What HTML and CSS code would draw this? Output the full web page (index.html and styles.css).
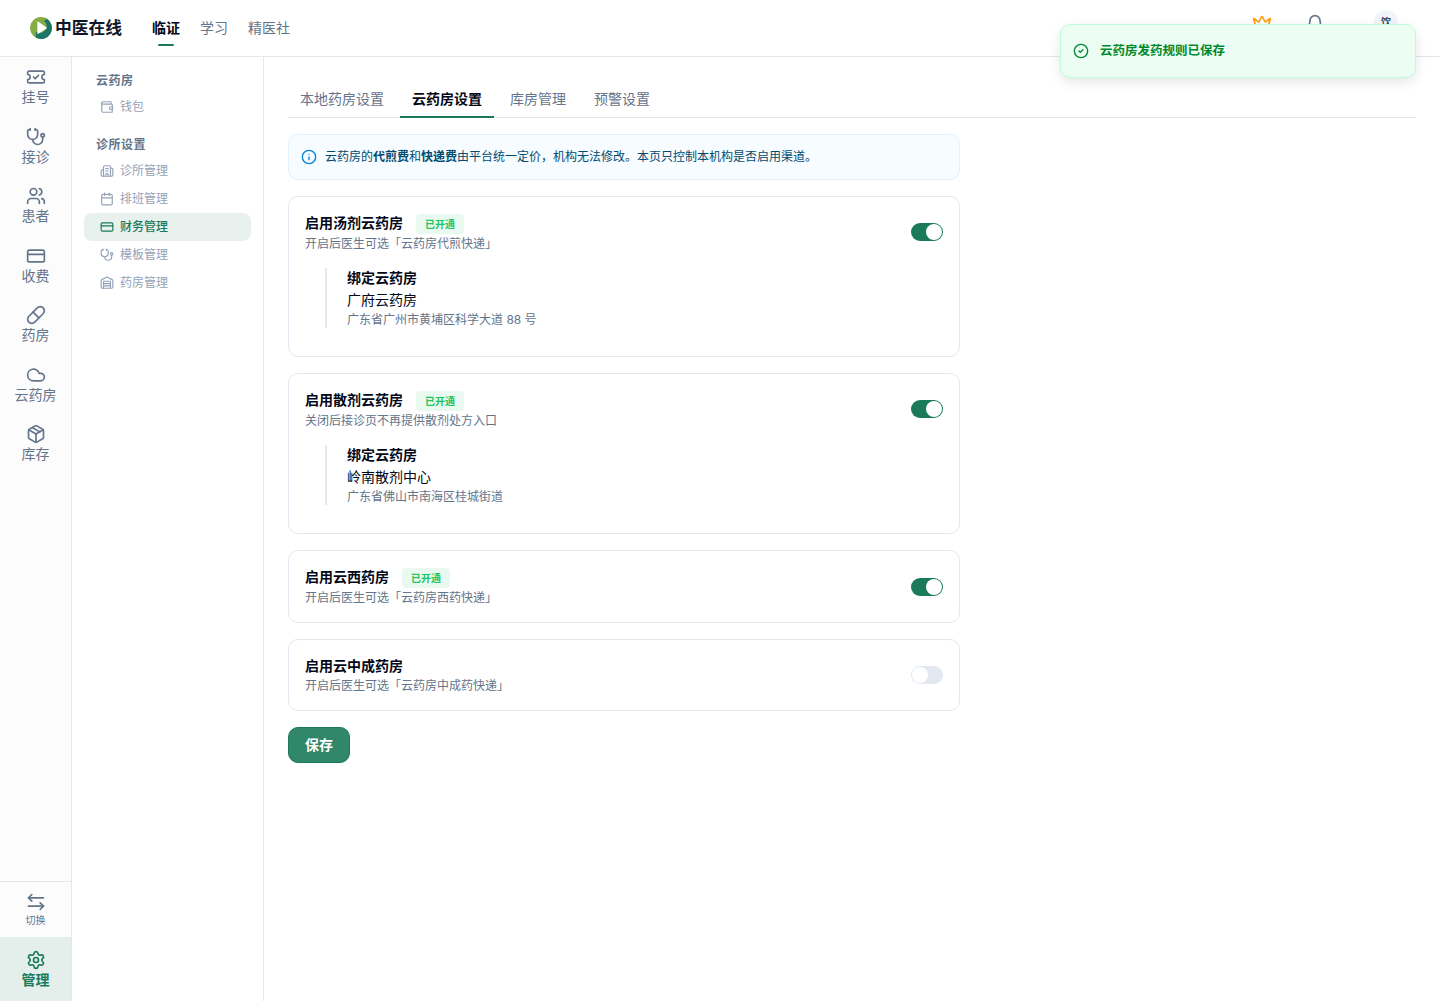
FILE: index.html
```html
<!DOCTYPE html>
<html lang="zh-CN">
<head>
  <meta charset="UTF-8">
  <meta name="viewport" content="width=device-width, initial-scale=1.0">
  <title>中医在线 - 云药房设置</title>

  <link rel="stylesheet" href="styles.css">
</head>
<body>

  <header class="topbar">
    <div class="logo">
      <svg class="logo-mark" viewBox="0 0 22 22">
        <circle cx="11" cy="11" r="10.900" fill="#86ad45"/>
        <path d="M16.500 1.600A10.900 10.900 0 0 1 6.200 20.800Q5 18 6.500 14.500Q12 18 15.500 13Q18.500 7 13.800 3.800Q16 3.500 16.500 1.600Z" fill="#1c7568"/>
        <path d="M7.400 5.200Q7.400 4.300 8.300 4.800L16.400 10.200Q17.200 10.900 16.400 11.500L8.300 16.800Q7.400 17.300 7.400 16.300Z" fill="#fff"/>
      </svg>
      <span>中医在线</span>
    </div>
    <nav class="topnav">
      <a class="active">临证</a>
      <a>学习</a>
      <a>精医社</a>
    </nav>
    <div class="user-tools">
      <svg class="icon crown" viewBox="0 0 24 24"><path d="M11.562 3.266a.5.5 0 0 1 .876 0L15.390 8.870a1 1 0 0 0 1.516.294L21.183 5.500a.5.5 0 0 1 .798.519l-2.834 10.246a1 1 0 0 1-.956.734H5.810a1 1 0 0 1-.957-.734L2.020 6.020a.5.5 0 0 1 .798-.519l4.276 3.664a1 1 0 0 0 1.516-.294z"/><path d="M5 21h14"/></svg>
      <svg class="icon bell" viewBox="0 0 24 24"><path d="M10.268 21a2 2 0 0 0 3.464 0"/><path d="M3.262 15.326A1 1 0 0 0 4 17h16a1 1 0 0 0 .740-1.673C19.410 13.956 18 12.499 18 8A6 6 0 0 0 6 8c0 4.499-1.411 5.956-2.738 7.326"/></svg>
      <span class="avatar">饮</span>
    </div>
  </header>

  <div class="layout">
    <aside class="rail">
      <div class="rail-list">
        <a class="rail-item">
          <svg class="icon" viewBox="0 0 24 24"><path d="M2 9a3 3 0 1 1 0 6v2a2 2 0 0 0 2 2h16a2 2 0 0 0 2-2v-2a3 3 0 1 1 0-6V7a2 2 0 0 0-2-2H4a2 2 0 0 0-2 2Z"/><path d="m9 12 2 2 4-4"/></svg>
          <span>挂号</span>
        </a>
        <a class="rail-item">
          <svg class="icon" viewBox="0 0 24 24"><path d="M11 2v2"/><path d="M5 2v2"/><path d="M5 3H4a2 2 0 0 0-2 2v4a6 6 0 0 0 12 0V5a2 2 0 0 0-2-2h-1"/><path d="M8 15a6 6 0 0 0 12 0v-3"/><circle cx="20" cy="10" r="2"/></svg>
          <span>接诊</span>
        </a>
        <a class="rail-item">
          <svg class="icon" viewBox="0 0 24 24"><path d="M16 21v-2a4 4 0 0 0-4-4H6a4 4 0 0 0-4 4v2"/><circle cx="9" cy="7" r="4"/><path d="M22 21v-2a4 4 0 0 0-3-3.870"/><path d="M16 3.128a4 4 0 0 1 0 7.744"/></svg>
          <span>患者</span>
        </a>
        <a class="rail-item">
          <svg class="icon" viewBox="0 0 24 24"><rect width="20" height="14" x="2" y="5" rx="2"/><path d="M2 10h20"/></svg>
          <span>收费</span>
        </a>
        <a class="rail-item">
          <svg class="icon" viewBox="0 0 24 24"><path d="m10.500 20.500 10-10a4.950 4.950 0 1 0-7-7l-10 10a4.950 4.950 0 1 0 7 7Z"/><path d="m8.500 8.500 7 7"/></svg>
          <span>药房</span>
        </a>
        <a class="rail-item">
          <svg class="icon" viewBox="0 0 24 24"><path d="M17.500 19H9a7 7 0 1 1 6.710-9h1.790a4.500 4.500 0 1 1 0 9Z"/></svg>
          <span>云药房</span>
        </a>
        <a class="rail-item">
          <svg class="icon" viewBox="0 0 24 24"><path d="M11 21.730a2 2 0 0 0 2 0l7-4A2 2 0 0 0 21 16V8a2 2 0 0 0-1-1.730l-7-4a2 2 0 0 0-2 0l-7 4A2 2 0 0 0 3 8v8a2 2 0 0 0 1 1.730z"/><path d="M12 22V12"/><path d="M3.290 7 12 12l8.710-5"/><path d="m7.500 4.270 9 5.150"/></svg>
          <span>库存</span>
        </a>
      </div>
      <a class="rail-switch">
        <svg class="icon" viewBox="0 0 24 24"><path d="M7 3 3 7l4 4"/><path d="M3 7h18"/><path d="m17 21 4-4-4-4"/><path d="M21 17H3"/></svg>
        <span>切换</span>
      </a>
      <a class="rail-manage">
        <svg class="icon" viewBox="0 0 24 24"><path d="M9.671 4.136a2.340 2.340 0 0 1 4.659 0 2.340 2.340 0 0 0 3.319 1.915 2.340 2.340 0 0 1 2.330 4.033 2.340 2.340 0 0 0 0 3.831 2.340 2.340 0 0 1-2.330 4.033 2.340 2.340 0 0 0-3.319 1.915 2.340 2.340 0 0 1-4.659 0 2.340 2.340 0 0 0-3.320-1.915 2.340 2.340 0 0 1-2.330-4.033 2.340 2.340 0 0 0 0-3.831A2.340 2.340 0 0 1 6.350 6.051a2.340 2.340 0 0 0 3.319-1.915"/><circle cx="12" cy="12" r="3"/></svg>
        <span>管理</span>
      </a>
    </aside>

    <aside class="submenu">
      <h2>云药房</h2>
      <a class="sub-item">
        <svg class="icon" viewBox="0 0 24 24"><path d="M19 7V4a1 1 0 0 0-1-1H5a2 2 0 0 0 0 4h15a1 1 0 0 1 1 1v4h-3a2 2 0 0 0 0 4h3a1 1 0 0 0 1-1v-2a1 1 0 0 0-1-1"/><path d="M3 5v14a2 2 0 0 0 2 2h15a1 1 0 0 0 1-1v-4"/></svg>
        钱包
      </a>
      <h2>诊所设置</h2>
      <a class="sub-item">
        <svg class="icon" viewBox="0 0 24 24"><path d="M10 12h4"/><path d="M10 8h4"/><path d="M14 21v-3a2 2 0 0 0-4 0v3"/><path d="M6 10H4a2 2 0 0 0-2 2v7a2 2 0 0 0 2 2h16a2 2 0 0 0 2-2V9a2 2 0 0 0-2-2h-2"/><path d="M6 21V5a2 2 0 0 1 2-2h8a2 2 0 0 1 2 2v16"/></svg>
        诊所管理
      </a>
      <a class="sub-item">
        <svg class="icon" viewBox="0 0 24 24"><path d="M8 2v4"/><path d="M16 2v4"/><rect width="18" height="18" x="3" y="4" rx="2"/><path d="M3 10h18"/></svg>
        排班管理
      </a>
      <a class="sub-item active">
        <svg class="icon" viewBox="0 0 24 24"><rect width="20" height="14" x="2" y="5" rx="2"/><path d="M2 10h20"/></svg>
        财务管理
      </a>
      <a class="sub-item">
        <svg class="icon" viewBox="0 0 24 24"><path d="M11 2v2"/><path d="M5 2v2"/><path d="M5 3H4a2 2 0 0 0-2 2v4a6 6 0 0 0 12 0V5a2 2 0 0 0-2-2h-1"/><path d="M8 15a6 6 0 0 0 12 0v-3"/><circle cx="20" cy="10" r="2"/></svg>
        模板管理
      </a>
      <a class="sub-item">
        <svg class="icon" viewBox="0 0 24 24"><path d="M18 21V10a1 1 0 0 0-1-1H7a1 1 0 0 0-1 1v11"/><path d="M22 19a2 2 0 0 1-2 2H4a2 2 0 0 1-2-2V8a2 2 0 0 1 1.132-1.803l7.950-3.974a2 2 0 0 1 1.837 0l7.948 3.974A2 2 0 0 1 22 8z"/><path d="M6 13h12"/><path d="M6 17h12"/></svg>
        药房管理
      </a>
    </aside>

    <main class="content">
      <div class="tabs">
        <a>本地药房设置</a>
        <a class="active">云药房设置</a>
        <a>库房管理</a>
        <a>预警设置</a>
      </div>

      <div class="settings">
        <div class="notice">
          <svg class="icon" viewBox="0 0 24 24"><circle cx="12" cy="12" r="10"/><path d="M12 16v-4"/><path d="M12 8h.01"/></svg>
          <p>云药房的<b>代煎费</b>和<b>快递费</b>由平台统一定价，机构无法修改。本页只控制本机构是否启用渠道。</p>
        </div>

        <section class="card">
          <div class="card-head with-binding">
            <div class="card-title">
              <h3>启用汤剂云药房<span class="badge">已开通</span></h3>
              <p>开启后医生可选「云药房代煎快递」</p>
            </div>
            <span class="switch on"></span>
          </div>
          <div class="binding">
            <h4>绑定云药房</h4>
            <div class="shop">广府云药房</div>
            <p>广东省广州市黄埔区科学大道 88 号</p>
          </div>
        </section>

        <section class="card">
          <div class="card-head with-binding">
            <div class="card-title">
              <h3>启用散剂云药房<span class="badge">已开通</span></h3>
              <p>关闭后接诊页不再提供散剂处方入口</p>
            </div>
            <span class="switch on"></span>
          </div>
          <div class="binding">
            <h4>绑定云药房</h4>
            <div class="shop">岭南散剂中心</div>
            <p>广东省佛山市南海区桂城街道</p>
          </div>
        </section>

        <section class="card">
          <div class="card-head">
            <div class="card-title">
              <h3>启用云西药房<span class="badge">已开通</span></h3>
              <p>开启后医生可选「云药房西药快递」</p>
            </div>
            <span class="switch on"></span>
          </div>
        </section>

        <section class="card">
          <div class="card-head plain">
            <div class="card-title">
              <h3>启用云中成药房</h3>
              <p>开启后医生可选「云药房中成药快递」</p>
            </div>
            <span class="switch"></span>
          </div>
        </section>

        <button class="save" type="button">保存</button>
      </div>
    </main>
  </div>

  <div class="toast">
    <svg class="icon" viewBox="0 0 24 24"><circle cx="12" cy="12" r="10"/><path d="m9 12 2 2 4-4"/></svg>
    <span>云药房发药规则已保存</span>
  </div>

</body>
</html>
```
FILE: styles.css
```css
* {
  box-sizing: border-box;
}

body {
  margin: 0;
  height: 100vh;
  display: flex;
  flex-direction: column;
  overflow: hidden;
  font-family: Inter, "Noto Sans CJK SC", sans-serif;
  font-size: 14px;
  line-height: 20px;
  color: #020817;
  background: #fff;
}

h2, h3, h4, p {
  margin: 0;
}

.icon {
  width: 20px;
  height: 20px;
  flex-shrink: 0;
  fill: none;
  stroke: currentColor;
  stroke-width: 2;
  stroke-linecap: round;
  stroke-linejoin: round;
}

/* top bar */
.topbar {
  height: 57px;
  flex-shrink: 0;
  display: flex;
  align-items: center;
  padding: 0 42px 0 30px;
  border-bottom: 1px solid #e2e8f0;
}

.logo {
  display: flex;
  align-items: center;
  gap: 3px;
  width: 122px;
  font-size: 16.8px;
  font-weight: 600;
  color: #0f172a;
  white-space: nowrap;
}

.logo-mark {
  width: 22px;
  height: 22px;
}

.topnav {
  display: flex;
  gap: 20px;
  height: 36px;
}

.topnav a {
  display: flex;
  flex-direction: column;
  align-items: center;
  padding-top: 8px;
  color: #64748b;
}

.topnav .active {
  color: #020817;
  font-weight: 600;
}

.topnav .active::after {
  content: "";
  width: 16px;
  height: 2px;
  margin-top: 6px;
  border-radius: 1px;
  background: #1a7a5a;
}

.user-tools {
  display: flex;
  align-items: center;
  margin-left: auto;
  margin-bottom: 12px;
}

.crown {
  color: #ff9e0d;
  margin: 3px 32.5px 0 0;
}

.bell {
  color: #64748b;
  margin: 3px 49.5px 0 0;
}

.avatar {
  width: 24px;
  height: 24px;
  border-radius: 50%;
  background: #f1f5f9;
  color: #334155;
  font-size: 10px;
  line-height: 24px;
  font-weight: 600;
  text-align: center;
}

.layout {
  flex: 1;
  display: flex;
  min-height: 0;
}

/* icon rail */
.rail {
  width: 72px;
  display: flex;
  flex-direction: column;
  border-right: 1px solid #e2e8f0;
  background: #fcfcfc;
  color: #64748b;
}

.rail-list {
  flex: 1;
}

.rail-item {
  display: flex;
  flex-direction: column;
  align-items: center;
  gap: 1px;
  padding: 10px 0 11px;
  line-height: 17.5px;
}

.rail-switch {
  height: 56px;
  display: flex;
  flex-direction: column;
  align-items: center;
  gap: 1px;
  padding-top: 10px;
  border-top: 1px solid #e2e8f0;
  font-size: 10px;
  line-height: 15px;
}

.rail-manage {
  height: 64px;
  display: flex;
  flex-direction: column;
  align-items: center;
  gap: 1px;
  padding-top: 13px;
  background: #e4eeeb;
  color: #1a7a5a;
  font-weight: 600;
  line-height: 17.5px;
}

/* second level menu */
.submenu {
  width: 192px;
  padding: 14px 12px 12px;
  border-right: 1px solid #e2e8f0;
}

.submenu h2 {
  padding: 0 12px;
  margin-bottom: 2px;
  font-size: 12px;
  letter-spacing: 0.5px;
  line-height: 20px;
  font-weight: 600;
  color: #64748b;
}

.sub-item + h2 {
  margin-top: 14px;
}

.sub-item {
  height: 28px;
  display: flex;
  align-items: center;
  gap: 6px;
  padding: 0 16px;
  border-radius: 8px;
  font-size: 12px;
  color: #94a3b8;
}

.sub-item .icon {
  width: 14px;
  height: 14px;
}

.sub-item.active {
  background: #e8f1ee;
  color: #1a7a5a;
  font-weight: 500;
}

/* page content */
.content {
  flex: 1;
  padding: 24px;
}

.tabs {
  display: flex;
  gap: 4px;
  height: 37px;
  border-bottom: 1px solid #e2e8f0;
}

.tabs a {
  height: 37px;
  padding: 8px 12px 7px;
  border-bottom: 2px solid transparent;
  color: #64748b;
}

.tabs .active {
  border-color: #1a7a5a;
  color: #020817;
  font-weight: 600;
}

.settings {
  width: 672px;
  display: flex;
  flex-direction: column;
  gap: 16px;
  margin-top: 16px;
}

.notice {
  height: 46px;
  display: flex;
  align-items: center;
  gap: 8px;
  padding: 0 12px;
  border: 1px solid #dff2fe;
  border-radius: 10px;
  background: #f6fcff;
  font-size: 12px;
  color: #024a70;
}

.notice .icon {
  width: 16px;
  height: 16px;
  color: #0084d1;
}

.notice b {
  font-weight: 600;
}

.card {
  padding: 16px;
  border: 1px solid #e2e8f0;
  border-radius: 10px;
}

.card-head {
  display: flex;
  align-items: center;
  justify-content: space-between;
  height: 39px;
}

.card-head.with-binding,
.card-head.plain {
  height: 38px;
}

.card-title {
  align-self: flex-start;
}

.card h3 {
  display: flex;
  align-items: center;
  height: 20px;
  font-size: 14px;
  font-weight: 600;
}

.card p {
  font-size: 12px;
  line-height: 20px;
  color: #64748b;
}

.card-title p {
  line-height: 22px;
}

.plain .card-title p {
  line-height: 20px;
}

.badge {
  height: 20px;
  margin: 2px 0 0 13px;
  padding: 0 9px;
  border-radius: 4px;
  background: #e9f9ef;
  color: #22c55e;
  font-size: 10px;
  line-height: 20px;
  font-weight: 600;
}

.binding {
  height: 60px;
  margin: 17px 0 12px 20px;
  padding-left: 20px;
  border-left: 2px solid #e2e8f0;
}

.binding h4 {
  font-size: 14px;
  font-weight: 600;
}

.binding .shop {
  padding-top: 2px;
}

.switch {
  width: 32px;
  height: 18px;
  padding: 1px;
  border-radius: 9px;
  background: #e2e8f0;
}

.switch::before {
  content: "";
  display: block;
  width: 16px;
  height: 16px;
  border-radius: 50%;
  background: #fff;
}

.switch.on {
  background: #1a7a5a;
}

.switch.on::before {
  margin-left: auto;
}

.save {
  align-self: flex-start;
  width: 62px;
  height: 36px;
  padding: 0 0 2px;
  border: 1px solid #1a7a5a;
  border-radius: 10px;
  background: #318769;
  color: #fff;
  font-family: inherit;
  font-size: 14px;
  font-weight: 600;
}

.toast {
  position: absolute;
  top: 24px;
  right: 24px;
  width: 356px;
  height: 54px;
  display: flex;
  align-items: center;
  gap: 11px;
  padding: 0 12px;
  border: 1px solid #bffcd9;
  border-radius: 10px;
  background: #ecfdf3;
  box-shadow: 0 4px 12px rgba(0, 0, 0, 0.1);
  color: #008a2e;
  font-size: 12.5px;
  font-weight: 600;
}

.toast .icon {
  width: 16px;
  height: 16px;
}
```
